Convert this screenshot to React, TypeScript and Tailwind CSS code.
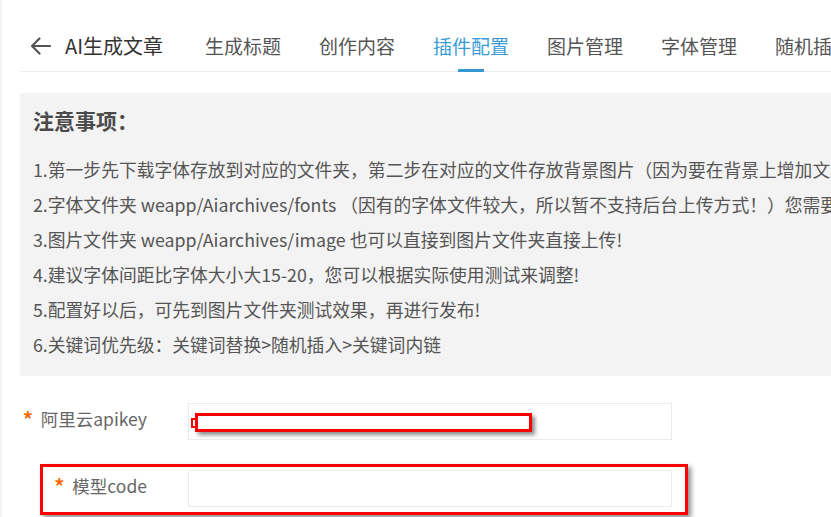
const tabs = ['生成标题', '创作内容', '插件配置', '图片管理', '字体管理', '随机插入']

const notes = [
  '1.第一步先下载字体存放到对应的文件夹，第二步在对应的文件存放背景图片（因为要在背景上增加文字，所以需要先准备好背景图片）',
  '2.字体文件夹 weapp/Aiarchives/fonts （因有的字体文件较大，所以暂不支持后台上传方式！）您需要手动上传到该目录下',
  '3.图片文件夹 weapp/Aiarchives/image 也可以直接到图片文件夹直接上传!',
  '4.建议字体间距比字体大小大15-20，您可以根据实际使用测试来调整!',
  '5.配置好以后，可先到图片文件夹测试效果，再进行发布!',
  '6.关键词优先级：关键词替换>随机插入>关键词内链',
]

export default function App() {
  return (
    <div
      className="flex h-[517px] w-[831px] overflow-hidden bg-white"
      style={{ fontFamily: '"Noto Sans CJK SC", "Noto Sans", sans-serif' }}
    >
      {/* thin gray gutter on the far left */}
      <div className="w-[2px] shrink-0 bg-[#f4f4f4]" />

      <div className="min-w-0 flex-1 pl-[18px]">
        {/* header with back arrow + tabs */}
        <div className="mt-[20px] flex h-[52px] items-center border-b border-[#ececec] whitespace-nowrap">
          <svg className="ml-[10px] shrink-0" width="21" height="18" viewBox="0 0 21 18" fill="none">
            <path d="M20 9H2M9.5 1.5L2 9l7.5 7.5" stroke="#555" strokeWidth="2.2" strokeLinecap="round" strokeLinejoin="round" />
          </svg>
          <span className="ml-[14px] text-[20px] leading-none text-[#333]">AI生成文章</span>
          <div className="ml-[42px] flex h-full gap-[38px]">
            {tabs.map((t) => {
              const active = t === '插件配置'
              return (
                <div key={t} className="relative flex h-full items-center">
                  <span className={'text-[19px] leading-none ' + (active ? 'text-[#3a9bd6]' : 'text-[#555]')}>{t}</span>
                  {active && (
                    <span className="absolute bottom-[-1px] left-1/2 h-[3px] w-[26px] -translate-x-1/2 bg-[#3797d3]" />
                  )}
                </div>
              )
            })}
          </div>
        </div>

        {/* notice box */}
        <div className="mt-[21px] w-[900px] bg-[#f3f3f3] pb-[14px] pl-[13px] pt-[12px] whitespace-nowrap">
          <h3 className="text-[21px] font-bold leading-[30px] text-[#4a4a4a]">注意事项：</h3>
          <div className="mt-[17px] text-[17.8px] leading-[35px] text-[#555]">
            {notes.map((n) => (
              <p key={n}>{n}</p>
            ))}
          </div>
        </div>

        {/* form */}
        <div className="mt-[27px] flex flex-col gap-[30px]">
          <div className="flex items-start">
            <label className="flex h-[32px] w-[127px] items-center justify-end text-[17.5px] text-[#666]">
              <span className="mr-[8px] text-[20px] font-bold leading-none text-[#f56a00]">*</span>
              阿里云apikey
            </label>
            <div className="relative ml-[41px] h-[37px] w-[484px] border border-[#ebebeb]">
              <span className="absolute left-[2px] top-[14px] h-[10px] w-[6px] border-2 border-[#ff0000] bg-white" />
              <span className="absolute left-[6px] top-[9px] h-[19px] w-[337px] border-[3px] border-[#ff0000] bg-white shadow-[3px_3px_4px_rgba(0,0,0,0.45)]" />
            </div>
          </div>

          <div className="relative flex items-start">
            <label className="flex h-[32px] w-[127px] items-center justify-end text-[17.5px] text-[#666]">
              <span className="mr-[8px] text-[20px] font-bold leading-none text-[#f56a00]">*</span>
              模型code
            </label>
            <div className="ml-[41px] h-[37px] w-[484px] border border-[#ebebeb]" />
            <span className="pointer-events-none absolute left-[20px] top-[-6px] h-[51px] w-[648px] border-[3px] border-[#ff0000] shadow-[3px_3px_5px_rgba(0,0,0,0.45)]" />
          </div>
        </div>
      </div>
    </div>
  )
}
